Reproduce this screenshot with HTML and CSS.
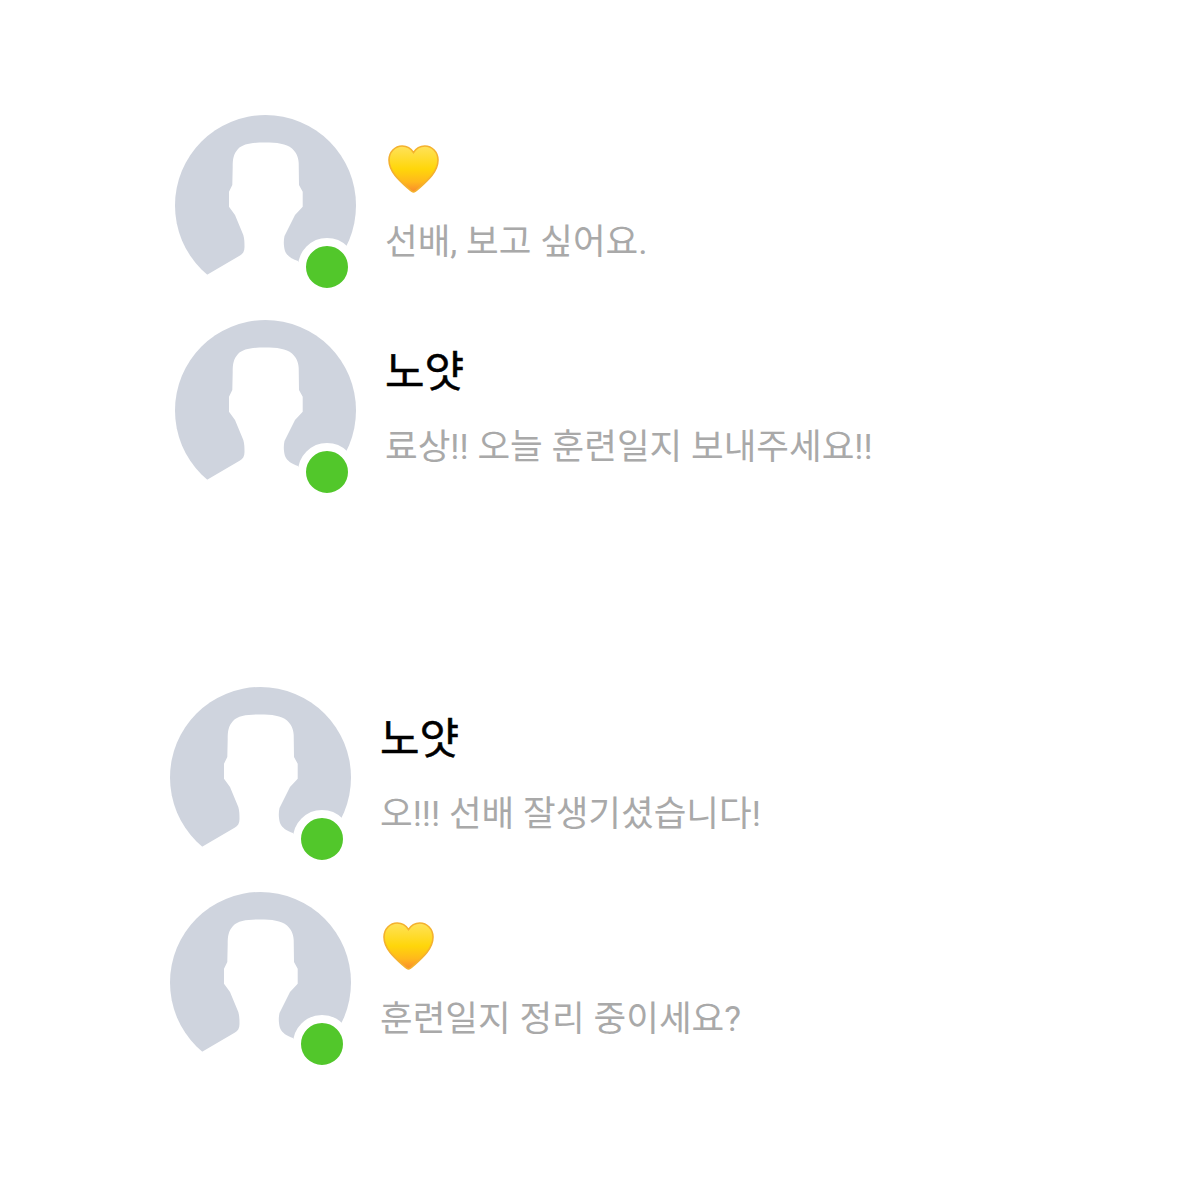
FILE: index.html
```html
<!DOCTYPE html>
<html lang="ko">
<head>
    <meta charset="UTF-8">
    <meta name="viewport" content="width=device-width, initial-scale=1.0">
    <title>노얏</title>
    <link rel="stylesheet" href="styles.css">
</head>
<body>
    <svg class="defs" width="0" height="0">
        <defs>
            <linearGradient id="heartFill" x1="0" y1="0" x2="0" y2="1">
                <stop offset="0" stop-color="#ffe25a"/>
                <stop offset="0.5" stop-color="#ffd60a"/>
                <stop offset="0.78" stop-color="#ffb81c"/>
                <stop offset="1" stop-color="#f98a2c"/>
            </linearGradient>
            <symbol id="person" viewBox="0 0 181 181">
                <circle cx="90.5" cy="90.5" r="90.5" fill="#cfd4de"/>
                <path fill="#fff" d="M90 27.5C78 27.5 68 28.5 63 34C58.5 39 57.7 44 57.7 52L57.3 70L54 76.7L54 91.7L60 100L68.3 120C69.5 124 69.5 128 69.5 132C69.5 136 68 139 65 140.5L31.7 160L60 185L150 185L123 146C117 144 112 141 110 136C108.5 130 108.5 126 109.5 121L120 100L127.7 91.7L127.7 76.7L124 70L123.7 48C123.5 42 121 37 117 33.5C111 28.5 102 27.5 90 27.5Z"/>
            </symbol>
            <symbol id="heart" viewBox="0 0 51 48">
                <path fill="url(#heartFill)" stroke="#f4b12e" stroke-width="1.6" d="M25.5 47C24 47 22.5 45.6 20 43.2C11 35.2 1 26.5 1 15C1 7 7 1 14.2 1C19 1 23 3.5 25.5 7.5C28 3.5 32 1 36.8 1C44 1 50 7 50 15C50 26.5 40 35.2 31 43.2C28.5 45.6 27 47 25.5 47Z"/>
            </symbol>
        </defs>
    </svg>

    <div class="page">
        <section class="group group-top">
            <div class="row">
                <div class="avatar">
                    <svg class="avatar-img" width="181" height="181"><use href="#person"/></svg>
                    <span class="status"></span>
                </div>
                <div class="info">
                    <div class="name"><svg class="heart" width="51" height="48"><use href="#heart"/></svg></div>
                    <div class="message">선배, 보고 싶어요.</div>
                </div>
            </div>
            <div class="row">
                <div class="avatar">
                    <svg class="avatar-img" width="181" height="181"><use href="#person"/></svg>
                    <span class="status"></span>
                </div>
                <div class="info">
                    <div class="name">노얏</div>
                    <div class="message">료상!! 오늘 훈련일지 보내주세요!!</div>
                </div>
            </div>
        </section>

        <section class="group group-bottom">
            <div class="row">
                <div class="avatar">
                    <svg class="avatar-img" width="181" height="181"><use href="#person"/></svg>
                    <span class="status"></span>
                </div>
                <div class="info">
                    <div class="name">노얏</div>
                    <div class="message">오!!! 선배 잘생기셨습니다!</div>
                </div>
            </div>
            <div class="row">
                <div class="avatar">
                    <svg class="avatar-img" width="181" height="181"><use href="#person"/></svg>
                    <span class="status"></span>
                </div>
                <div class="info">
                    <div class="name"><svg class="heart" width="51" height="48"><use href="#heart"/></svg></div>
                    <div class="message">훈련일지 정리 중이세요?</div>
                </div>
            </div>
        </section>
    </div>
</body>
</html>
```

FILE: styles.css
```css
body {
    font-family: Roboto, "Noto Sans CJK KR", sans-serif;
    background-color: #fff;
    margin: 0;
    padding: 0;
}

.defs {
    position: absolute;
}

.page {
    display: flex;
    flex-direction: column;
    gap: 186px;
    padding-top: 115px;
}

.group {
    display: flex;
    flex-direction: column;
    gap: 24px;
}

.group-top {
    padding-left: 175px;
}

.group-bottom {
    padding-left: 170px;
}

.row {
    display: flex;
    gap: 29px;
}

.avatar {
    position: relative;
    width: 181px;
    height: 181px;
}

.avatar-img {
    display: block;
}

.status {
    position: absolute;
    left: 123px;
    top: 123px;
    width: 42px;
    height: 42px;
    background-color: #52c72b;
    border: 8px solid #fff;
    border-radius: 50%;
}

.info {
    display: flex;
    flex-direction: column;
    padding-top: 18px;
}

.name {
    display: flex;
    align-items: center;
    height: 60px;
    font-size: 43px;
    color: #000;
    -webkit-text-stroke: 0.5px #000;
}

.heart {
    display: block;
    margin: 12px 0 0 3px;
}

.message {
    margin-top: 27px;
    height: 44px;
    line-height: 44px;
    font-size: 35.5px;
    color: #a9a9a9;
}
```
